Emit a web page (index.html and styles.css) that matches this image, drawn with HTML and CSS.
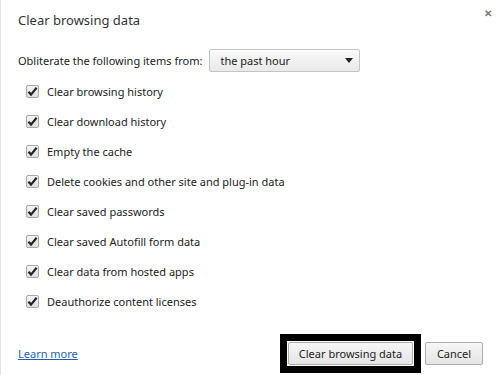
FILE: index.html
```html
<!DOCTYPE html>
<html lang="en">
<head>
  <meta charset="UTF-8">
  <title>Clear browsing data</title>
  <link rel="stylesheet" href="styles.css">
</head>
<body>
<div class="dialog">
  <div class="header">
    <h1 class="title">Clear browsing data</h1>
    <span class="close">&#x2715;</span>
  </div>

  <div class="period">
    <span>Obliterate the following items from:</span>
    <div class="select">
      <span>the past hour</span>
      <span class="arrow"></span>
    </div>
  </div>

  <ul class="items">
    <li><span class="check"><svg width="11" height="11" viewBox="0 0 11 11"><path d="M1.5 5.8 L4 8.6 L9.6 1.8" fill="none" stroke="#222" stroke-width="2.2"/></svg></span>Clear browsing history</li>
    <li><span class="check"><svg width="11" height="11" viewBox="0 0 11 11"><path d="M1.5 5.8 L4 8.6 L9.6 1.8" fill="none" stroke="#222" stroke-width="2.2"/></svg></span>Clear download history</li>
    <li><span class="check"><svg width="11" height="11" viewBox="0 0 11 11"><path d="M1.5 5.8 L4 8.6 L9.6 1.8" fill="none" stroke="#222" stroke-width="2.2"/></svg></span>Empty the cache</li>
    <li><span class="check"><svg width="11" height="11" viewBox="0 0 11 11"><path d="M1.5 5.8 L4 8.6 L9.6 1.8" fill="none" stroke="#222" stroke-width="2.2"/></svg></span>Delete cookies and other site and plug-in data</li>
    <li><span class="check"><svg width="11" height="11" viewBox="0 0 11 11"><path d="M1.5 5.8 L4 8.6 L9.6 1.8" fill="none" stroke="#222" stroke-width="2.2"/></svg></span>Clear saved passwords</li>
    <li><span class="check"><svg width="11" height="11" viewBox="0 0 11 11"><path d="M1.5 5.8 L4 8.6 L9.6 1.8" fill="none" stroke="#222" stroke-width="2.2"/></svg></span>Clear saved Autofill form data</li>
    <li><span class="check"><svg width="11" height="11" viewBox="0 0 11 11"><path d="M1.5 5.8 L4 8.6 L9.6 1.8" fill="none" stroke="#222" stroke-width="2.2"/></svg></span>Clear data from hosted apps</li>
    <li><span class="check"><svg width="11" height="11" viewBox="0 0 11 11"><path d="M1.5 5.8 L4 8.6 L9.6 1.8" fill="none" stroke="#222" stroke-width="2.2"/></svg></span>Deauthorize content licenses</li>
  </ul>

  <div class="footer">
    <a href="#" class="learn">Learn more</a>
    <div class="buttons">
      <span class="focus-ring"><button class="btn btn-clear">Clear browsing data</button></span>
      <button class="btn btn-cancel">Cancel</button>
    </div>
  </div>
</div>
</body>
</html>
```

FILE: styles.css
```css
body {
  margin: 0;
  background: #fff;
  font-family: "Noto Sans", "Open Sans", sans-serif;
  font-size: 11px;
  color: #222;
}
.dialog {
  height: 375px;
  box-sizing: border-box;
  border-left: 1px solid #e2e2e2;
  padding: 0 16px 0 17px;
}
.header {
  display: flex;
  justify-content: space-between;
  align-items: flex-start;
  height: 40px;
  padding-top: 10px;
  box-sizing: border-box;
}
.title {
  margin: 0;
  font-size: 13px;
  font-weight: normal;
  line-height: 20px;
  color: #333;
}
.close {
  font-size: 10px;
  line-height: 10px;
  color: #777;
  font-weight: bold;
  margin: -2px -9px 0 0;
}
.period {
  display: flex;
  align-items: center;
  gap: 7px;
  margin-top: 9px;
}
.select {
  display: flex;
  align-items: center;
  justify-content: space-between;
  width: 151px;
  height: 23px;
  box-sizing: border-box;
  padding: 0 6px 0 10px;
  border: 1px solid #c4c4c4;
  border-radius: 2px;
  background: linear-gradient(#fafafa, #e9e9e9);
}
.arrow {
  width: 0;
  height: 0;
  border-left: 4px solid transparent;
  border-right: 4px solid transparent;
  border-top: 5px solid #222;
}
.items {
  list-style: none;
  margin: 4px 0 0;
  padding: 0 0 0 8px;
}
.items li {
  display: flex;
  align-items: center;
  height: 30px;
}
.check {
  display: flex;
  align-items: center;
  justify-content: center;
  width: 13px;
  height: 13px;
  box-sizing: border-box;
  margin-right: 8px;
  border: 1px solid #a8a8a8;
  border-radius: 2px;
  background: linear-gradient(#f4f4f4, #dedede);
}
.footer {
  display: flex;
  justify-content: space-between;
  align-items: center;
  margin-top: 18px;
}
.learn {
  color: #1a5fb4;
  text-decoration: underline;
}
.buttons {
  display: flex;
  align-items: center;
  gap: 4px;
}
.focus-ring {
  display: flex;
  padding: 1px;
  border: 7px solid #000;
}
.btn {
  height: 23px;
  padding: 0;
  font-family: inherit;
  font-size: 11px;
  color: #222;
  border: 1px solid #acacac;
  border-radius: 2px;
  background: linear-gradient(#f7f7f7, #e4e4e4);
}
.btn-clear {
  width: 125px;
}
.btn-cancel {
  width: 58px;
}
```
